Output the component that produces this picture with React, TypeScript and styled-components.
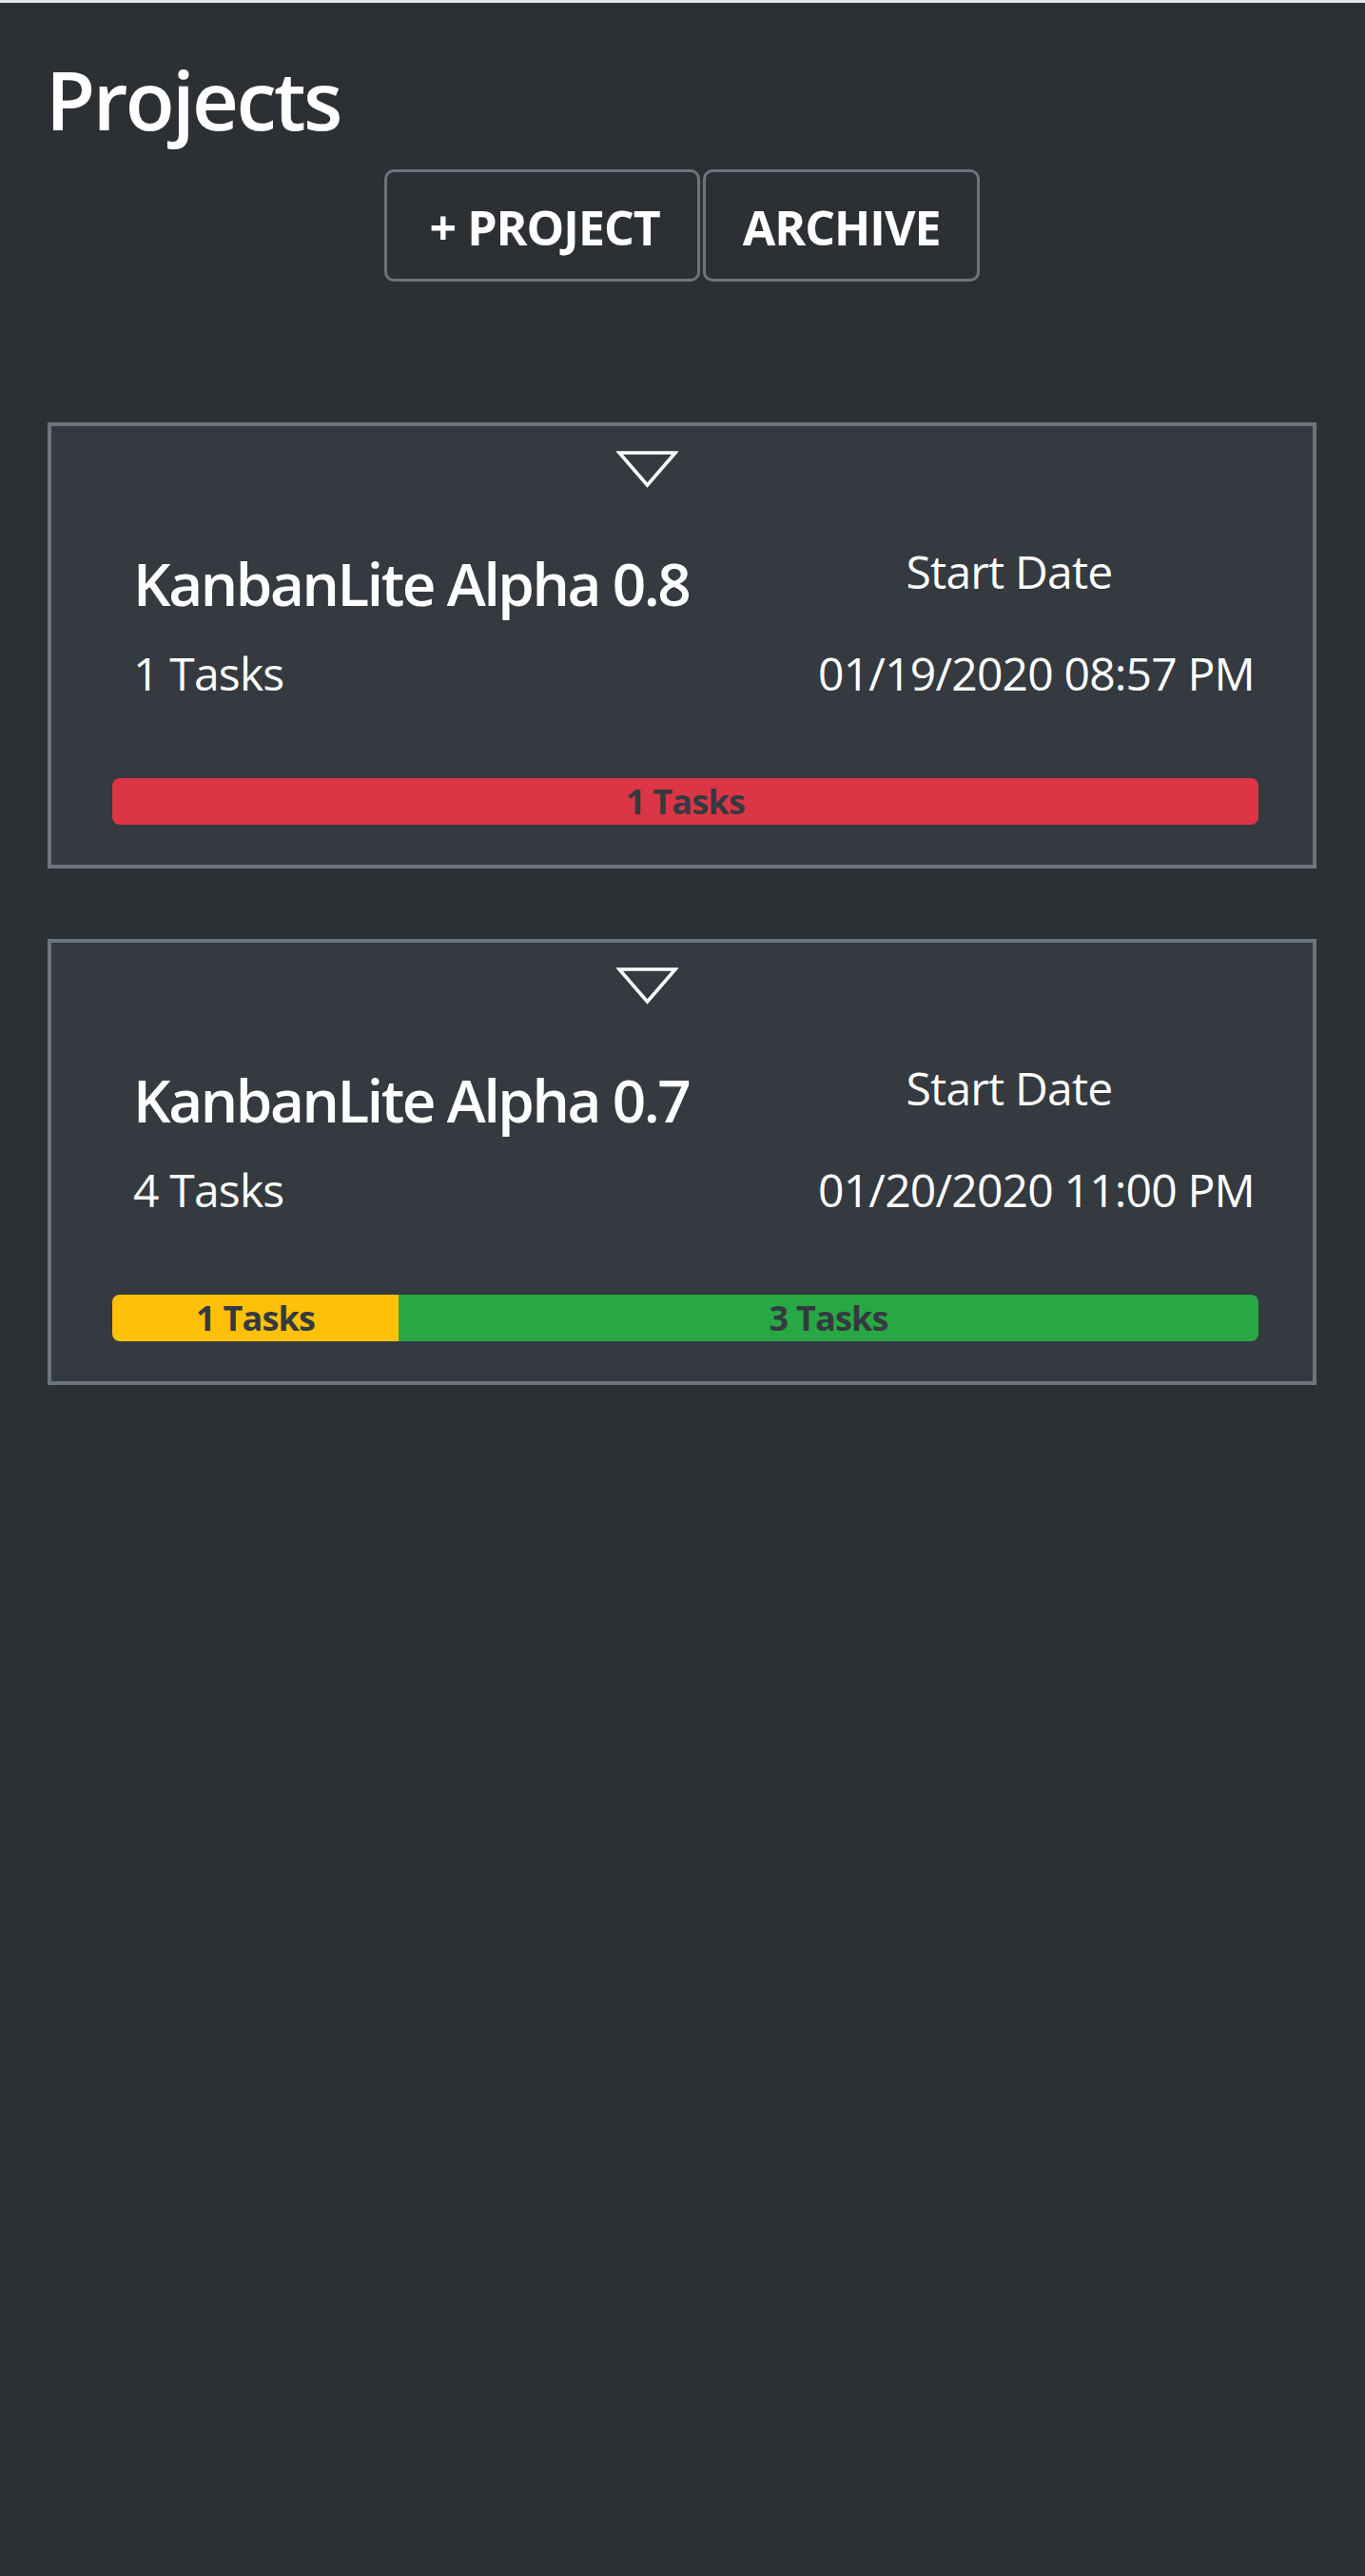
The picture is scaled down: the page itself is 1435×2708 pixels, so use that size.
import React from "react";
import styled, { createGlobalStyle } from "styled-components";

const GlobalStyle = createGlobalStyle`
  html, body {
    margin: 0;
    padding: 0;
    background: #2c3034;
  }
  body {
    font-family: "Open Sans", "Noto Sans", "Liberation Sans", sans-serif;
    color: #ffffff;
  }
  #root {
    min-height: 2708px;
    background: #2c3034;
  }
`;

const TopStrip = styled.div`
  height: 3px;
  background: #e3e6e9;
`;

const Page = styled.main`
  display: flex;
  flex-direction: column;
  padding: 0 51px 60px 50px;
`;

const PageTitle = styled.h1`
  margin: 50px 0 0 -2px;
  font-size: 85px;
  font-weight: 600;
  line-height: 1.2;
  letter-spacing: -2.6px;
  color: #ffffff;
`;

const Toolbar = styled.div`
  display: flex;
  justify-content: center;
  gap: 3px;
  margin-top: 23px;
`;

const ToolButton = styled.button<{ $padLeft?: number }>`
  background: transparent;
  border: 3px solid #6c757d;
  border-radius: 10px;
  color: #ffffff;
  font-family: inherit;
  font-size: 50px;
  font-weight: 700;
  line-height: 1.2;
  letter-spacing: -1px;
  padding: 28px 39px 24px ${(p) => p.$padLeft ?? 39}px;
  cursor: pointer;
`;

const CardList = styled.div`
  display: flex;
  flex-direction: column;
  gap: 74px;
  margin-top: 148px;
`;

const Card = styled.section`
  background: #343a40;
  border: 4px solid #6c757d;
  padding: 26px 57px 42px 64px;
  display: flex;
  flex-direction: column;
`;

const ToggleRow = styled.div`
  display: flex;
  justify-content: center;
  padding-right: 80px;
  height: 39px;
`;

const HeaderRow = styled.div`
  display: flex;
  justify-content: space-between;
  align-items: flex-start;
  margin-top: 59px;
`;

const InfoRow = styled.div`
  display: flex;
  justify-content: space-between;
  align-items: flex-start;
  margin-top: 29px;
`;

const LeftCell = styled.div`
  padding-left: 22px;
`;

const RightCell = styled.div<{ $align: "center" | "right" }>`
  width: 518px;
  text-align: ${(p) => p.$align};
  padding-right: ${(p) => (p.$align === "right" ? 4 : 6)}px;
  box-sizing: border-box;
`;

const ProjectName = styled.h2`
  margin: 0;
  padding-top: 4px;
  font-size: 62px;
  font-weight: 600;
  line-height: 1.2;
  letter-spacing: -2.4px;
`;

const BodyText = styled.div`
  font-size: 48px;
  font-weight: 400;
  line-height: 1.2;
  letter-spacing: -0.8px;
`;

const Progress = styled.div`
  display: flex;
  height: 49px;
  margin-top: 81px;
  border-radius: 8px;
  overflow: hidden;
  background: #495057;
`;

const ProgressSegment = styled.div<{ $color: string }>`
  display: flex;
  align-items: center;
  justify-content: center;
  background: ${(p) => p.$color};
  color: #343a40;
  font-size: 36px;
  font-weight: 700;
  letter-spacing: -0.8px;
  white-space: nowrap;
`;

const ToggleIcon = () => (
  <svg width="65" height="39" viewBox="0 0 65 39" aria-hidden="true">
    <polygon
      points="3,2 62,2 32.5,36"
      fill="none"
      stroke="#ffffff"
      strokeWidth="3.6"
      strokeLinejoin="miter"
    />
  </svg>
);

type Segment = { count: number; color: string };

type Project = {
  name: string;
  tasks: number;
  start: string;
  segments: Segment[];
};

const projects: Project[] = [
  {
    name: "KanbanLite Alpha 0.8",
    tasks: 1,
    start: "01/19/2020 08:57 PM",
    segments: [{ count: 1, color: "#dc3545" }],
  },
  {
    name: "KanbanLite Alpha 0.7",
    tasks: 4,
    start: "01/20/2020 11:00 PM",
    segments: [
      { count: 1, color: "#ffc107" },
      { count: 3, color: "#28a745" },
    ],
  },
];

const ProjectCard = ({ project }: { project: Project }) => (
  <Card>
    <ToggleRow>
      <ToggleIcon />
    </ToggleRow>
    <HeaderRow>
      <LeftCell>
        <ProjectName>{project.name}</ProjectName>
      </LeftCell>
      <RightCell $align="center">
        <BodyText>Start Date</BodyText>
      </RightCell>
    </HeaderRow>
    <InfoRow>
      <LeftCell>
        <BodyText>{project.tasks} Tasks</BodyText>
      </LeftCell>
      <RightCell $align="right">
        <BodyText>{project.start}</BodyText>
      </RightCell>
    </InfoRow>
    <Progress>
      {project.segments.map((s, i) => (
        <ProgressSegment
          key={i}
          $color={s.color}
          style={{ width: `${(s.count / project.tasks) * 100}%` }}
        >
          {s.count} Tasks
        </ProgressSegment>
      ))}
    </Progress>
  </Card>
);

export default function App() {
  return (
    <>
      <GlobalStyle />
      <TopStrip />
      <Page>
        <PageTitle>Projects</PageTitle>
        <Toolbar>
          <ToolButton $padLeft={45}>+ PROJECT</ToolButton>
          <ToolButton>ARCHIVE</ToolButton>
        </Toolbar>
        <CardList>
          {projects.map((p) => (
            <ProjectCard key={p.name} project={p} />
          ))}
        </CardList>
      </Page>
    </>
  );
}
